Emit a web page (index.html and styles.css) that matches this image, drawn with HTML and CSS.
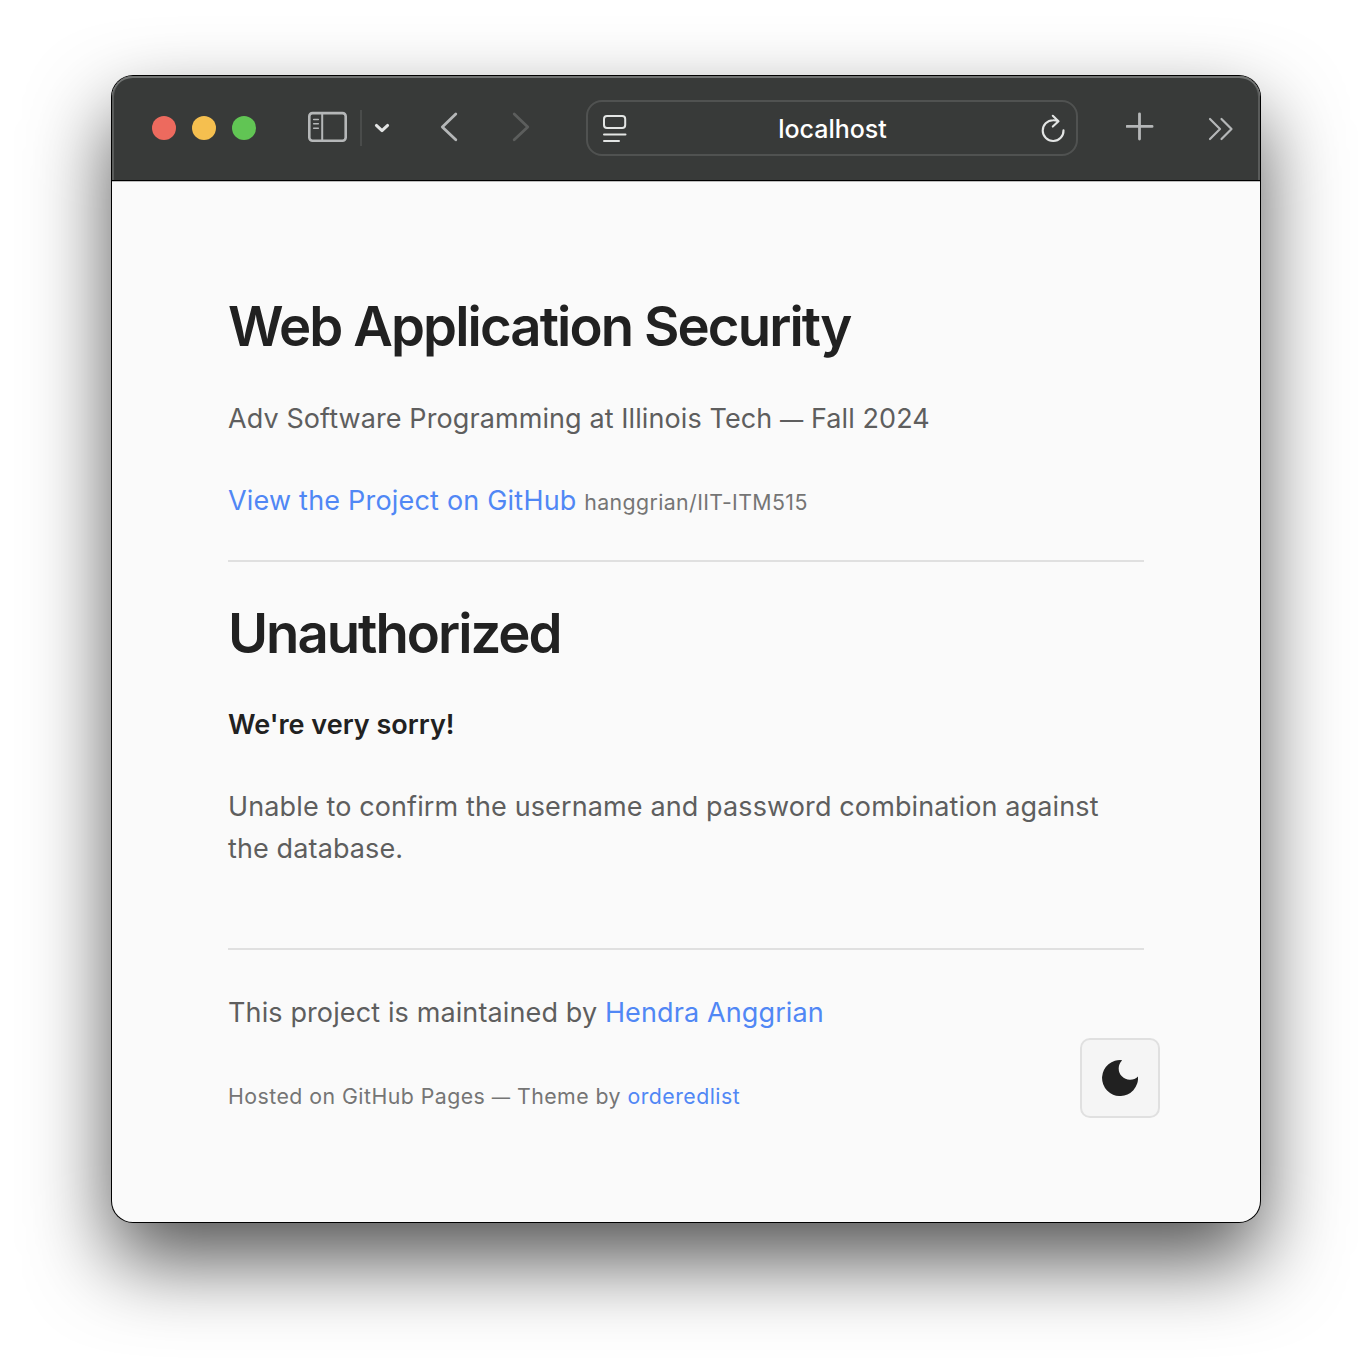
FILE: index.html
```html
<!DOCTYPE html>
<html lang="en">
<head>
<meta charset="utf-8">
<title>Web Application Security</title>
<link rel="stylesheet" href="styles.css">
</head>
<body>
<div class="window">
  <div class="toolbar">
    <div class="lights"><i class="light close"></i><i class="light minimize"></i><i class="light zoom"></i></div>
    <svg class="icon sidebar" width="40" height="40" viewBox="0 0 40 40"><rect x="1.3" y="5.1" width="36.4" height="27.6" rx="3.2" stroke-width="2.6"/><path d="M14.2 5v28" stroke-width="2"/><path d="M5.7 11.5h4.6M5.7 15.8h4.6M5.7 20.2h4.6" stroke-width="1.6"/></svg>
    <span class="divider"></span>
    <svg class="icon menu" width="16" height="40" viewBox="0 0 16 40"><path d="M2.4 17.4l5.6 5.2 5.6-5.2" stroke-width="3"/></svg>
    <svg class="icon back" width="20" height="40" viewBox="0 0 20 40"><path d="M15.8 6L2.3 18.9l13.5 12.9" stroke-width="2.8"/></svg>
    <svg class="icon forward" width="20" height="40" viewBox="0 0 20 40"><path d="M2.2 6l13.6 12.9L2.2 31.8" stroke-width="2.8"/></svg>
    <div class="address">
      <svg class="icon reader" width="24" height="40" viewBox="0 0 24 40"><rect x="1" y="8" width="21.2" height="12" rx="3" stroke-width="2"/><path d="M1 26.4h21.5M1 33h15" stroke-width="2"/></svg>
      <span class="host">localhost</span>
      <svg class="icon reload" width="24" height="40" viewBox="0 0 24 40"><path d="M22.5 22.2A10.4 10.4 0 1 1 12.1 12.2q2.3-.1 5.1.7M11.8 7.8l5.7 5.4-5.7 5.4" stroke-width="2.1"/></svg>
    </div>
    <svg class="icon plus" width="28" height="40" viewBox="0 0 28 40"><path d="M13.5 5.8v25.2M.9 18.4h25.2" stroke-width="2.8"/></svg>
    <svg class="icon more" width="26" height="40" viewBox="0 0 26 40"><path d="M2 11l10 10L2 31M13.5 11l10 10-10 10" stroke-width="2.2"/></svg>
  </div>
  <div class="page">
    <header>
      <h1>Web Application Security</h1>
      <p class="tagline">Adv Software Programming at Illinois Tech <span class="dash">—</span> Fall 2024</p>
      <p class="view"><a href="#">View the Project on GitHub</a> <small>hanggrian/IIT-ITM515</small></p>
    </header>
    <section>
      <h1>Unauthorized</h1>
      <p><strong>We're very sorry!</strong></p>
      <p class="message">Unable to confirm the username and password combination against<br>the database.</p>
    </section>
    <footer>
      <p>This project is maintained by <a href="#">Hendra Anggrian</a></p>
      <p><small class="credits">Hosted on GitHub Pages <span class="dash">—</span> Theme by <a href="#">orderedlist</a></small></p>
    </footer>
    <button class="theme" aria-label="Dark theme"><svg width="36" height="36" viewBox="0 0 36 36"><path d="M20.2.15A18 18 0 1 0 36 16.6A11.4 11.4 0 0 1 20.2.15z"/></svg></button>
  </div>
</div>
</body>
</html>
```
FILE: styles.css
```css
* { box-sizing: border-box; }
html { background: #fff; }
body { min-height: 1370px; margin: 0; padding: 76px 112px; background: #fff; font-family: Inter, sans-serif; font-size: 27px; line-height: 42px; letter-spacing: .12px; color: #5e5e5e; }
.window { width: 1148px; height: 1146px; border-radius: 21px; background: #fafafa; box-shadow: 0 0 0 1px #000, 0 38px 82px rgba(0, 0, 0, .68); }
.toolbar { display: flex; align-items: center; height: 106px; padding: 0 0 2px 40px; border-radius: 21px 21px 0 0; background: #383a39; box-shadow: inset 0 -1px #bdbdbd, inset 0 -2px #000, inset 0 2px #717372, inset 2px 0 #5a5c5b, inset -2px 0 #5a5c5b; }
.lights { display: flex; gap: 16px; }
.light { width: 24px; height: 24px; border-radius: 50%; }
.close { background: #ed6a5e; }
.minimize { background: #f5bf4f; }
.zoom { background: #61c554; }
.icon { flex: none; fill: none; stroke: #b5b7b8; stroke-linecap: round; stroke-linejoin: round; }
.sidebar { margin-left: 52px; }
.divider { width: 2px; height: 36px; margin-left: 12px; background: #4a4c4b; }
.menu { margin-left: 12px; stroke: #e3e4e4; }
.back { margin-left: 50px; }
.forward { margin-left: 52px; stroke: #5c5e5d; }
.address { display: flex; align-items: center; width: 492px; height: 56px; margin-left: 54px; padding: 0 11px 0 15px; border: 2px solid #505251; border-radius: 16px; }
.reader, .reload { stroke: #e3e5e4; }
.host { flex: 1; padding: 2px 3px 0 0; text-align: center; font-size: 25px; font-weight: 500; letter-spacing: 0; color: #fff; }
.plus { margin-left: 48px; }
.more { margin-left: 54px; }
.page { position: relative; height: 1040px; padding: 113px 116px 0; }
h1 { margin: 0 0 41px; font-size: 54.5px; font-weight: 600; line-height: 62px; letter-spacing: -1.9px; color: #212121; }
p { margin: 0 0 40px; }
.tagline { letter-spacing: .09px; }
.view { margin-bottom: 38px; }
.view a { letter-spacing: .2px; }
header, .message { white-space: nowrap; }
section { padding-top: 40px; border-top: 2px solid #e0e0e0; }
section h1 { margin-bottom: 40px; letter-spacing: -2px; }
footer { padding-top: 42px; border-top: 2px solid #e0e0e0; }
.message { margin-bottom: 78px; }
strong { font-weight: 600; letter-spacing: 0; color: #212121; }
a { color: #5087f5; text-decoration: none; }
small { font-size: 21.3px; line-height: 1; letter-spacing: .39px; color: #757575; }
.credits { letter-spacing: .46px; }
.dash { font-size: .86em; line-height: 1; }
.theme { position: absolute; right: 100px; bottom: 104px; display: flex; align-items: center; justify-content: center; width: 80px; height: 80px; padding: 0; border: 2px solid #e0e0e0; border-radius: 10px; background: #f5f5f5; fill: #212121; }
```
